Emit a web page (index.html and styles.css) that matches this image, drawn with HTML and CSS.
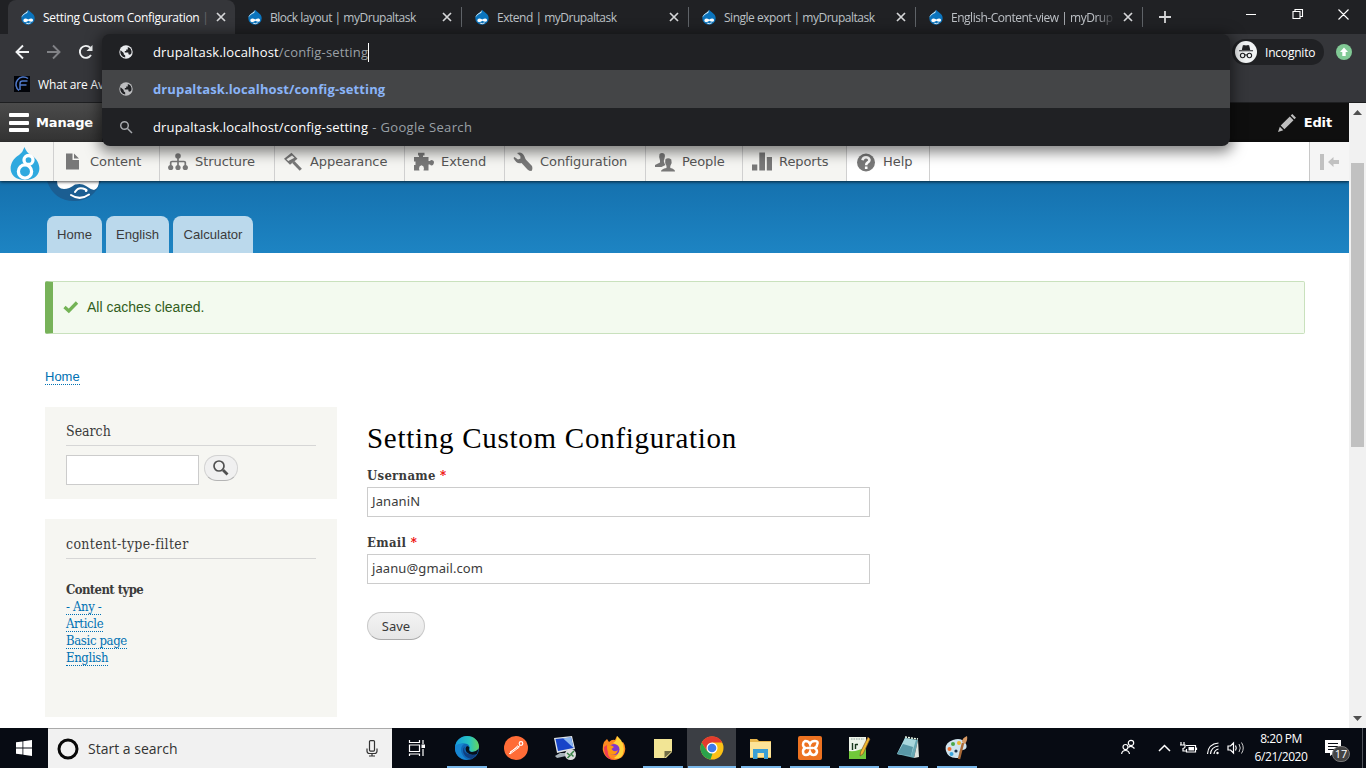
FILE: index.html
```html
<!DOCTYPE html>
<html lang="en">
<head>
<meta charset="utf-8">
<title>Setting Custom Configuration</title>
<link rel="stylesheet" href="styles.css">
</head>
<body>
<svg class="defs" width="0" height="0">
  <symbol id="drop" viewBox="0 0 16 16"><path d="M8.3.8C9 3 14.7 4.3 14.7 9.2A6.6 6.4 0 0 1 1.3 9.2C1.3 4.8 7 4 8.3.8Z" fill="#0b74bd"/><path d="M8 .9C6.500 4 2 4.500 1.500 8.600 3 6 5.500 4.600 7.200 4Z" fill="#d9f1fc"/><path d="M3.400 12C3 9.500 5.500 8.700 8.300 10.600 10.500 8.700 13.500 9 13 11.600 12.700 13.400 10.300 12.800 8.400 11.700 6.500 13.300 4 13.800 3.400 12Z" fill="#fff"/><path d="M6.200 14.200Q8.500 15.300 10.700 13.800" fill="none" stroke="#fff" stroke-width=".9"/></symbol>
  <symbol id="globe" viewBox="0 0 14 14"><circle cx="7" cy="7" r="6.700" fill="currentColor"/><path d="M1.600 5.300 4.700 8.100V9.300L6.200 10.400V12.500A5.500 5.500 0 0 1 1.600 5.300ZM8.800 1.900A5.500 5.500 0 0 1 12.300 8.400L11 9.700 9.500 9.300 9.300 7.500H5.800V6.100H7.200V4.400H8.800Z" fill="#202124"/></symbol>
  <symbol id="x" viewBox="0 0 10 10"><path d="M1 1 9 9M9 1 1 9" fill="none" stroke="currentColor" stroke-width="1.700"/></symbol>
</svg>
<div class="screen">
  <header class="chrome">
    <div class="tabstrip">
      <div class="tab active"><svg class="fav"><use href="#drop"/></svg><span>Setting Custom Configuration <i>|</i></span><svg class="close"><use href="#x"/></svg></div>
      <div class="tab"><svg class="fav"><use href="#drop"/></svg><span>Block layout | myDrupaltask</span><svg class="close"><use href="#x"/></svg></div>
      <div class="tab"><svg class="fav"><use href="#drop"/></svg><span>Extend | myDrupaltask</span><svg class="close"><use href="#x"/></svg></div>
      <div class="tab"><svg class="fav"><use href="#drop"/></svg><span>Single export | myDrupaltask</span><svg class="close"><use href="#x"/></svg></div>
      <div class="tab"><svg class="fav"><use href="#drop"/></svg><span class="long">English-Content-view | myDrup</span><svg class="close"><use href="#x"/></svg></div>
      <svg class="newtab" viewBox="0 0 12 12"><path d="M6 0V12M0 6H12" stroke="#d5d6d8" stroke-width="1.800"/></svg>
      <svg class="winbtns" width="104" height="12" viewBox="0 0 104 12" fill="none" stroke="#fff" stroke-width="1.100"><path d="M0 6.500H10M47 3.500h7v7h-7zM49 3.500V1.500h7.500v7h-2M92.500 1.500l10 10M102.500 1.500l-10 10"/></svg>
    </div>
    <div class="toolbar">
      <svg width="82" height="16" viewBox="0 0 82 16" fill="none" stroke="#f1f3f4" stroke-width="1.900"><path d="M14 8H1.500M8 1.500 1.500 8 8 14.500"/><path d="M32 8H44.500M38 1.500 44.500 8 38 14.500" stroke="#818286"/><path d="M76 11A6 6 0 1 1 75.200 3.700"/><path d="M77.500 1V7H71.500Z" fill="#f1f3f4" stroke="none"/></svg>
      <div class="incog"><svg width="22" height="22" viewBox="0 0 22 22"><circle cx="11" cy="11" r="11" fill="#f1f3f4"/><path d="M4 9.800H18M7.500 8.500 8.300 4.800H10L11 5.300 12 4.800H13.700L14.500 8.500Z" fill="#202124" stroke="#202124" stroke-width="1.100"/><g fill="none" stroke="#202124" stroke-width="1.100"><circle cx="7.600" cy="14.500" r="2.200"/><circle cx="14.400" cy="14.500" r="2.200"/><path d="M9.800 14.200Q11 13.400 12.200 14.200"/></g></svg><span>Incognito</span></div>
      <svg class="update" width="16" height="16" viewBox="0 0 16 16"><circle cx="8" cy="8" r="8" fill="#81c995"/><path d="M8 3.500 12 8H9.700V12H6.300V8H4Z" fill="#fff"/></svg>
    </div>
    <div class="bookmarks"><svg width="16" height="16" viewBox="0 0 16 16"><path d="M0 0H16V16H0Z" fill="#020409"/><path d="M14 2.500A7 7 0 1 0 5 14.500M13.500 5H8.500Q6 5 6 7.500V14M6 9H12.500" fill="none" stroke="#4f78c8" stroke-width="1.500"/></svg><span>What are Av</span></div>
  </header>

  <div class="viewport">
    <main class="page">
      <div class="adminbar"><div class="manage"><i></i><i></i><i></i></div><b>Manage</b><div class="edit"><svg width="18" height="18" viewBox="0 0 18 18" fill="#bebebe"><path d="M0 18 1.800 12.700 5.300 16.200ZM2.700 11.600 11.800 2.500 15.500 6.200 6.400 15.300ZM12.700 1.600 14.300 0 18 3.700 16.400 5.300Z"/></svg><b>Edit</b></div></div>
      <nav class="tray">
        <a class="d8"><svg width="32" height="34" viewBox="0 0 32 34"><path d="M15.500 0Q17 5 22 8C34 15 34 33 16 33S-2 15 10 8Q14 5 15.500 0Z" fill="#2fa9df"/><g fill="none" stroke="#fff" stroke-width="3.300"><ellipse cx="19.500" cy="13" rx="4.500" ry="4.500"/><circle cx="16" cy="24.500" r="6.600"/></g></svg></a>
        <a class="i1"><svg viewBox="0 0 20 20"><path d="M3 1.500H9.500V8H16V17.500H3ZM11 1.500 16 6.500H11Z"/></svg><span>Content</span></a>
        <a class="i2"><svg viewBox="0 0 20 20"><circle cx="10" cy="4" r="2.800"/><circle cx="2.700" cy="15.500" r="2.600"/><circle cx="10" cy="15.500" r="2.600"/><circle cx="17.300" cy="15.500" r="2.600"/><path d="M2.700 16V10.500Q2.700 9.500 4 9.500H16Q17.300 9.500 17.300 10.500V16M10 4V16" fill="none" stroke="#787878" stroke-width="1.700"/></svg><span>Structure</span></a>
        <a class="i3"><svg viewBox="0 0 20 20"><path d="M8.500.8 14.500 6.800 7 12.700 1 6.700ZM9 3.500 3.500 7.200 5.200 9 11.500 5.800Z" fill-rule="evenodd"/><path d="M10.300 10 17.800 17.800" stroke="#787878" stroke-width="3"/></svg><span>Appearance</span></a>
        <a class="i4"><svg viewBox="0 0 20 20"><path d="M0 5H5V3.500H4V.8H10.500V3.500H9V5H14.500V9H16Q17 7.500 19 8.500T19 13Q17 14 16 12.500H14.500V18.500H9.500Q11 14 7.500 13.300 4 14 5.500 18.500H0V13H1.500V9.500H0Z"/></svg><span>Extend</span></a>
        <a class="i5"><svg viewBox="0 0 20 20"><path d="M4 1Q9-1 11.500 4.500Q12 6.500 13 7.800L19 14Q20 17 18.500 19 16 19 14.500 17.500L8.500 11Q3.500 12.500.5 6L1.500 5 5 7.500 7.500 6.500 7.300 4Z"/></svg><span>Configuration</span></a>
        <a class="i6"><svg viewBox="0 0 20 20"><path d="M0 15V13L5 10.500V8.500Q3.500 5 4.500 2 7 0 9.500 2 10.500 4 9.500 6.500 8 9 9.500 11.500L10.500 13 6.500 15Z"/><path d="M6 19.500Q6 17 11.500 16V14Q9.500 11 10.300 7.500 13 5 16.300 7.500 17.500 11 15.300 14V16Q20 17 20 19.500Z"/></svg><span>People</span></a>
        <a class="i7"><svg viewBox="0 0 20 20"><path d="M0 12.500H5.300V18.500H0ZM7.300.5H13V18.500H7.300ZM14.800 5H20V18.500H14.800Z"/></svg><span>Reports</span></a>
        <a class="i8"><svg viewBox="0 0 20 20"><circle cx="10" cy="10.500" r="9"/><path d="M6.500 8.200Q7 5.200 10 5.200T13.500 8Q13.500 9.500 11.500 10.700 10.200 11.500 10.200 13.300M10.200 14.500V17" fill="none" stroke="#fff" stroke-width="2.600"/></svg><span>Help</span></a>
        <a class="orient"><svg width="20" height="16" viewBox="0 0 20 16"><path d="M0 0H4V16H0ZM8 8 13.500 3V6H19V10H13.500V13Z"/></svg></a>
      </nav>
      <header class="brand">
        <svg class="logo" width="54" height="20" viewBox="0 0 54 20"><path d="M0 0Q7 20 27 20T54 0Z" fill="#1b5e92"/><path d="M10 0Q10 8 17 8Q22 8 28 3.500 35 2 39 5T47 9Q52 7 52 0Z" fill="#fff"/><path d="M28 11Q31 6 36 7.500T39 10M24 14Q33 20 42 13.500" fill="none" stroke="#fff" stroke-width="2" stroke-linecap="round"/></svg>
        <nav class="menu"><a class="w1">Home</a><a class="w2">English</a><a class="w3">Calculator</a></nav>
      </header>
      <div class="status"><svg width="16" height="14" viewBox="0 0 16 14"><path d="M1.500 7 5.800 11 14 2.500" fill="none" stroke="#73b355" stroke-width="3.300"/></svg><span>All caches cleared.</span></div>
      <div class="crumb"><a>Home</a></div>
      <div class="columns">
        <aside>
          <section class="block search"><h2>Search</h2><div class="searchrow"><input type="text"><button><svg width="16" height="16" viewBox="0 0 16 16" fill="none" stroke="#505050"><circle cx="6" cy="6" r="5" stroke-width="1.700"/><path d="M10 10 14.500 14.500" stroke-width="2.800"/></svg></button></div></section>
          <section class="block filter"><h2>content-type-filter</h2><b>Content type</b><ul><li><a>- Any -</a></li><li><a>Article</a></li><li><a>Basic page</a></li><li><a>English</a></li></ul></section>
        </aside>
        <form class="config">
          <h1>Setting Custom Configuration</h1>
          <label>Username <em>*</em></label><div class="field">JananiN</div>
          <label>Email <em>*</em></label><div class="field">jaanu@gmail.com</div>
          <button type="button">Save</button>
        </form>
      </div>
    </main>
    <div class="scrollbar"><svg width="9" height="5" viewBox="0 0 9 5"><path d="M0 5 4.500 0 9 5Z" fill="#505050"/></svg><div class="thumb"></div><svg width="9" height="5" viewBox="0 0 9 5"><path d="M0 0H9L4.500 5Z" fill="#505050"/></svg></div>
  </div>

  <footer class="taskbar">
    <div class="start"><svg width="16" height="16" viewBox="0 0 16 16" fill="#fff"><path d="M0 2.300 6.500 1.400V7.500H0ZM7.300 1.300 16 0V7.500H7.300ZM0 8.400H6.500V14.600L0 13.700ZM7.300 8.400H16V16L7.300 14.700Z"/></svg></div>
    <div class="find"><svg width="22" height="22" viewBox="0 0 22 22"><circle cx="11" cy="11" r="9" fill="none" stroke="#080808" stroke-width="3"/></svg><span>Start a search</span><svg width="12" height="17" viewBox="0 0 12 17" fill="none" stroke="#333" stroke-width="1.200"><rect x="3.500" y=".6" width="5" height="10.500" rx="1"/><path d="M1 8.500V11Q1 13.500 3.500 13.500H8.500Q11 13.500 11 11V8.500M6 13.500V16M3 16H9"/></svg></div>
    <div class="task taskview"><svg width="18" height="16" viewBox="0 0 18 16" fill="none" stroke="#fff" stroke-width="1.200"><path d="M1.500 0V2.500H11.500V0M1.500 5H11.500V11.500H1.500ZM1.500 16V14H11.500V16M15 0V4M15 9V16"/><path d="M13.500 4.500H17V8H13.500Z" fill="#fff" stroke="none"/></svg></div>
    <div class="task on"><svg viewBox="0 0 24 24"><defs><linearGradient id="eg" x1="0" x2="1"><stop stop-color="#159cdd"/><stop offset=".6" stop-color="#28c5c0"/><stop offset="1" stop-color="#66d55d"/></linearGradient></defs><circle cx="12" cy="12" r="12" fill="#1068b7"/><path d="M0 11C1 4 6 0 12 0 19 0 24 5 24 10.500 24 16 16 17 14.300 14.500 15 12 15 7.500 9.500 7.500 4.500 7.500.5 10 0 11Z" fill="url(#eg)"/><path d="M9.500 8C4 10 5 20 13 23.800 4 24.500-1 17 0 10.500 2 7.500 7 6.800 9.500 8Z" fill="#1786d2"/><path d="M11 9.500Q8 12 10 16 13 20 22 17.500 20 21 16.500 23 8 21 8 14.500 8.500 11 11 9.500Z" fill="#103f80"/><path d="M14.300 11Q13.500 14 15 15.500 19 17.500 23.500 13L22 18Q15 20 11.500 16 9.500 12 12 10Z" fill="#08111c"/></svg></div>
    <div class="task"><svg viewBox="0 0 24 24"><circle cx="12" cy="12" r="12" fill="#ff6c37"/><path d="M5 18 14 9.500M6 16 16 9.500M6 18 15.500 11" stroke="#fff" stroke-width="1" fill="none"/><circle cx="17" cy="7.500" r="1.800" fill="none" stroke="#fff" stroke-width="1.200"/></svg></div>
    <div class="task"><svg viewBox="0 0 24 24"><path d="M1 2 19 0 22 13 4 17Z" fill="#dfe5e8"/><path d="M2.500 3 18 1.500 20.500 12 5 15Z" fill="#1744c8"/><path d="M10 2.200 18 1.500 20.500 12Z" fill="#8cb7f0"/><path d="M7 17H13V20L4 22 2 20Z" fill="#a7b2b9"/><circle cx="17.500" cy="18.500" r="5.500" fill="#ddd"/><path d="M14 17 17 19.500 14.500 22M21 15 18 18 20.500 20.500" fill="none" stroke="#378244" stroke-width="1.500"/></svg></div>
    <div class="task"><svg viewBox="0 0 24 24"><path d="M2 6 5 3 7 6Q10 3 13 4L15 0Q19 4 19 7L21 6Q24 10 23 15C21 27 3 27 .8 14Q.5 9 2 6Z" fill="#ff8a1f"/><path d="M15 0Q24 7 21 18 18 24 12 22 18 18 16 12 15 8 11 7Q15 5 15 0Z" fill="#ffd43b"/><path d="M2 11Q2 24 13 24 7 23 6 18L5 9Z" fill="#ef3d55"/><circle cx="12" cy="13.500" r="5.500" fill="#8038cf"/><path d="M5 10Q9 8 12 11L9.500 13Q12 17 16 14 14 20 9 18.500 5 16 5 10Z" fill="#ff980f"/></svg></div>
    <div class="task on"><svg viewBox="0 0 24 24"><path d="M3 3H21V16L15 22H3Z" fill="#f2e595"/><path d="M21 15 13.500 22V15Z" fill="#716d45"/></svg></div>
    <div class="task on current"><svg viewBox="0 0 24 24"><circle cx="12" cy="12" r="11.500" fill="#fbc116"/><path d="M12 12 7 15 1.700 6.800A11.500 11.500 0 0 1 22.300 6.500H12Z" fill="#e33b2e"/><path d="M1.700 6.800 7 15 12.500 17.500 10.500 23.400A11.500 11.500 0 0 1 1.700 6.800Z" fill="#2ba24c"/><circle cx="12" cy="12" r="5.500" fill="#fff"/><circle cx="12" cy="12" r="4.300" fill="#3f7bea"/></svg></div>
    <div class="task on"><svg viewBox="0 0 24 24"><path d="M1 3H8L10 5H22V22H1Z" fill="#e8b64b"/><path d="M1 6H22V21H1Z" fill="#fde498"/><path d="M4 13H19V23H15V17H8.500V23H4Z" fill="#3a9fd5"/></svg></div>
    <div class="task on"><svg viewBox="0 0 24 24"><rect width="24" height="24" rx="2" fill="#ed7221"/><path d="M7 5Q11 5 12 8 13 5 17 5T19 9Q19 11 16.500 12 19 13 19 16 18 19 15.500 19 13 19 12 16 11 19 8 19 5 19 5 15.500 5 13 7.500 12 5 11 5 8.500 5 6 7 5Z" fill="none" stroke="#fff" stroke-width="2.500"/><path d="M9 12H15" stroke="#fff" stroke-width="2.500"/></svg></div>
    <div class="task on"><svg viewBox="0 0 24 24"><path d="M2 1H19V23H2Z" fill="#edf3e9"/><path d="M2 15Q10 16 19 11V23H2Z" fill="#70c83a"/><path d="M4 3H17" stroke="#8ba39f" stroke-dasharray="1.500 1"/><path d="M5.500 7V14M8.500 8V13M8.500 8.500H11" stroke="#17361b" stroke-width="1.400"/><path d="M21 1 23 3 16 18 13 20 13.500 16Z" fill="#efb72f" stroke="#7b5531" stroke-width=".7"/></svg></div>
    <div class="task on"><svg viewBox="0 0 24 24"><path d="M9 2 22 4 18 22 1 18Z" fill="#67a8b4"/><path d="M9 2 20 4 15 20 1 18Z" fill="#a9d7dd"/><path d="M7 8 17 11 15 20 1 18Z" fill="#5998a7"/><path d="M22 4 23 21 18 22Z" fill="#dfe5df"/><path d="M9 1 22 3" stroke="#efe" stroke-width="1.500" stroke-dasharray="2 1"/></svg></div>
    <div class="task on"><svg viewBox="0 0 24 24"><path d="M1 15Q-1 7 8 4 17 1 21 8 23 13 18 14 14 14 15 17 17 22 11 22 3 22 1 15Z" fill="#cfe3ed"/><g><circle cx="4.500" cy="13" r="2" fill="#ef7130"/><circle cx="8" cy="8" r="2" fill="#4ca848"/><circle cx="14" cy="7" r="2" fill="#ecb62f"/><circle cx="6.500" cy="18" r="2" fill="#39a6df"/><circle cx="11" cy="15" r="1.600" fill="#18324b"/></g><path d="M18 7 14 23" stroke="#a86836" stroke-width="2.500"/><path d="M17 6Q17 2 22 0 23 4 20 8Z" fill="#d79a65"/></svg></div>
    <div class="systray">
      <svg width="118" height="18" viewBox="0 0 118 18" fill="none" stroke="#fff" stroke-width="1.200"><circle cx="11" cy="4" r="2.700"/><circle cx="5.500" cy="8" r="2.500"/><path d="M1.600 15Q2 11.500 5.500 11.500T9.500 15M8.500 8.500Q11 6 14.500 9.500"/><path d="M39 12 44.500 6.500 50 12" stroke-width="1.500"/><path d="M66 6.500H75.500V13H66.500V10M76.500 8.500V11M61 3V6M64 3V6M60 6H65V8Q65 9 63 9.500V12H66"/><path d="M68.500 8H74V11.500H68.500Z" fill="#fff" stroke="none"/><path d="M94 15Q94.500 11 98.500 10M90.500 15Q91 8 98.500 7M87.500 15Q88 5 98.500 4"/><circle cx="97.500" cy="14" r="1.200" fill="#fff" stroke="none"/><path d="M108 7H110.500L113.500 4V14L110.500 11H108ZM115.500 6.500Q117 9 115.500 11.500"/></svg>
      <svg width="8" height="18" viewBox="0 0 8 18" fill="none" stroke="#ccc"><path d="M1 5Q3.500 9 1 13M3.500 3.500Q7 9 3.500 14.500"/></svg>
      <div class="clock"><span>8:20 PM</span><span>6/21/2020</span></div>
      <div class="notif"><svg width="16" height="16" viewBox="0 0 16 16"><path d="M0 0H16V13H9L5 16V13H0Z" fill="#fff"/><path d="M3 3.500H13M3 6.500H13M3 9.500H10" stroke="#080c14" stroke-width="1.200"/></svg><b>17</b></div>
    </div>
    <div class="peek"></div>
  </footer>

  <div class="omnibox">
    <div class="row typed"><svg><use href="#globe"/></svg><span>drupaltask.localhost</span><s>/config-setting</s><i class="caret"></i></div>
    <div class="row hit"><svg><use href="#globe"/></svg><b>drupaltask.localhost/config-setting</b></div>
    <div class="row"><svg viewBox="0 0 14 14" fill="none" stroke="#a5a8ac" stroke-width="1.500"><circle cx="5.500" cy="5.500" r="3.800"/><path d="M8.500 8.500 13 13"/></svg><span>drupaltask.localhost/config-setting</span><s class="via">- Google Search</s></div>
  </div>
</div>
</body>
</html>
```
FILE: styles.css
```css
* { box-sizing: border-box; }
body { margin: 0; overflow: hidden; }
svg { display: block; flex: none; }
.defs { position: absolute; }
.screen { position: relative; width: 1366px; height: 768px; display: flex; flex-direction: column; font-family: "Open Sans", sans-serif; }

/* browser frame */
.chrome { height: 103px; background: #35363a; border-bottom: 1px solid #1e1f21; font-size: 12px; color: #fff; flex: none; }
.tabstrip { height: 34px; display: flex; align-items: center; background: #202124; padding-left: 8px; }
.tab { width: 227px; height: 34px; display: flex; align-items: center; padding: 0 10px 0 12px; gap: 7px; color: #bdc1c6; background: linear-gradient(#5f6368, #5f6368) right center / 1px 20px no-repeat; letter-spacing: -0.48px; }
.tab.active { background: #35363a; border-radius: 8px 8px 0 0; color: #fff; letter-spacing: -0.3px; }
.fav { width: 16px; height: 16px; }
.tab span { flex: 1; white-space: nowrap; }
.tab span i { font-style: normal; color: #66676b; }
.tab .long { -webkit-mask: linear-gradient(90deg, #000 145px, transparent 164px); mask: linear-gradient(90deg, #000 145px, transparent 164px); }
.close { width: 10px; height: 10px; color: #d5d6d8; }
.newtab { width: 12px; height: 12px; margin-left: 16px; }
.winbtns { margin: -6px 16px 0 auto; }
.toolbar { height: 36px; display: flex; align-items: center; padding: 0 14px 0 15px; }
.incog { margin-left: auto; width: 92px; height: 26px; background: #202124; border-radius: 13px; display: flex; align-items: center; gap: 8px; padding-left: 3px; letter-spacing: -0.2px; }
.update { margin-left: 12px; }
.bookmarks { height: 28px; display: flex; align-items: center; gap: 8px; padding-left: 14px; letter-spacing: -0.15px; }
.omnibox { position: absolute; z-index: 5; left: 102px; top: 34px; width: 1128px; height: 112px; border-radius: 8px; overflow: hidden; background: #202124; color: #fff; font-size: 13px; letter-spacing: 0.17px; box-shadow: 0 3px 14px 3px rgba(0,0,0,.5); }
.row { height: 38px; display: flex; align-items: center; padding-left: 17px; white-space: pre; }
.row.typed { height: 36px; }
.row svg { width: 14px; height: 14px; margin-right: 20px; color: #e8eaed; }
.row s { text-decoration: none; color: #9aa0a6; }
.row .via { margin-left: 4px; letter-spacing: 0.35px; }
.row.hit { background: #444547; color: #8ab4f8; letter-spacing: 0.12px; }
.row.hit svg { color: #bcbdbf; }
.caret { width: 1px; height: 19px; background: #fff; }

/* document area */
.viewport { height: 625px; display: flex; flex: none; }
.page { width: 1349px; background: #fff; overflow: hidden; color: #3b3b3b; }
.scrollbar { width: 17px; background: #f1f1f1; display: flex; flex-direction: column; align-items: center; padding: 7px 0; }
.thumb { width: 13px; height: 284px; margin-top: 48px; margin-bottom: auto; background: #c1c1c1; }
.adminbar { height: 39px; display: flex; align-items: center; padding: 0 17px 0 9px; gap: 7px; color: #fff; font: 13px "DejaVu Sans", sans-serif; letter-spacing: -0.15px; background: linear-gradient(90deg, transparent 102px, #0f0f0f 102px), linear-gradient(#4b4b4b, #323232); }
.manage { width: 20px; height: 19px; display: flex; flex-direction: column; justify-content: space-between; }
.manage i { height: 4px; border-radius: 1px; background: #fff; }
.edit { margin-left: auto; display: flex; align-items: center; gap: 8px; }
.tray { position: relative; z-index: 1; height: 39px; display: flex; background: #fff; font: 13px "DejaVu Sans", sans-serif; color: #565656; box-shadow: 0 1px 3px rgba(0,0,0,.7); letter-spacing: -0.07px; }
.tray a { display: flex; align-items: center; padding-left: 9px; gap: 7px; background: #f5f5f2; border-right: 1px solid #d0d0d0; }
.tray a svg { width: 20px; height: 20px; fill: #787878; }
.tray .d8 { width: 54px; }
.tray .d8 svg { width: 32px; height: 34px; margin-top: 4px; }
.tray .i1 { width: 106px; } .tray .i2 { width: 115px; padding-left: 8px; } .tray .i3 { width: 130px; padding-left: 8px; } .tray .i4 { width: 100px; }
.tray .i5 { width: 141px; padding-left: 8px; } .tray .i6 { width: 97px; } .tray .i7 { width: 104px; }
.tray .i8 { width: 83px; background: #fff; }
.tray .orient { margin-left: auto; width: 40px; border: 0; border-left: 1px solid #c8c8c8; background: #f5f5f5; padding-left: 10px; }
.tray .orient svg { fill: #c1c1c1; height: 16px; }
.brand { height: 72px; padding-left: 47px; background: linear-gradient(#1571ae, #1d84c3); }
.menu { display: flex; gap: 4px; margin-top: 15px; font: 13.1px "Liberation Sans", sans-serif; }
.menu a { height: 37px; border-radius: 8px 8px 0 0; background: #bbd9ec; display: flex; justify-content: center; align-items: center; }
.w1 { width: 55px; } .w2 { width: 63px; } .w3 { width: 80px; }
.status { margin: 28px 44px 0 45px; height: 53px; border: 1px solid #c9e1bd; border-left: 8px solid #77b259; border-radius: 2px; background: #f3faef; color: #325e1c; display: flex; align-items: center; gap: 8px; padding: 0 0 2px 10px; font: 14px "Liberation Sans", sans-serif; }
.crumb { margin: 34px 0 0 45px; height: 39px; font: 13px/17px "Liberation Sans", sans-serif; }
.crumb a, li a { color: #0071b3; border-bottom: 1px dotted #0071b3; }
.columns { display: flex; gap: 30px; padding-left: 45px; font-family: "DejaVu Serif Condensed", "DejaVu Serif", serif; font-stretch: condensed; font-size: 13px; }
aside { width: 292px; }
.block { background: #f6f6f2; padding: 14px 21px 0; }
.search { height: 92px; margin-bottom: 20px; }
.filter { height: 198px; padding-top: 15px; line-height: 17px; }
.filter b { letter-spacing: -0.6px; }
.filter li { letter-spacing: -0.35px; }
h2 { margin: 0 0 9px; height: 25px; line-height: 21px; border-bottom: 1px solid #d6d6d6; font-weight: normal; font-size: 14px; }
.filter h2 { margin-bottom: 22px; letter-spacing: 0.35px; }
.searchrow { display: flex; gap: 5px; }
.searchrow input { width: 133px; height: 30px; padding: 0; border: 1px solid #ccc; background: #fff; }
.searchrow button { width: 34px; height: 26px; padding: 0; border: 1px solid #d2d2d2; border-bottom-color: #b4b4b4; border-radius: 13px; background: #f0f0f0; display: flex; justify-content: center; align-items: center; }
ul { list-style: none; margin: 0; padding: 0; }
li { height: 17px; }
li a { line-height: 14px; }
.config { width: 503px; padding-top: 12px; }
h1 { margin: 0 0 9px; height: 39px; font: 29px/38px "Liberation Serif", serif; letter-spacing: 0.73px; white-space: nowrap; color: #000; }
label { display: block; height: 20px; line-height: 17px; font-weight: bold; letter-spacing: 0.3px; }
label em { color: #e00; font-style: normal; }
.field { height: 30px; border: 1px solid #ccc; margin-bottom: 17px; padding-left: 4px; line-height: 27px; font-family: "Noto Sans", sans-serif; font-size: 13px; letter-spacing: 0.1px; }
.config button { width: 58px; height: 28px; margin-top: 11px; padding: 0 0 1px; border: 1px solid #c9c9c9; border-bottom-color: #aaa; border-radius: 14px; background: linear-gradient(#f3f3f3, #e6e6e6); font: 13px "Noto Sans", sans-serif; color: #3a3a3a; }

/* desktop taskbar */
.taskbar { height: 40px; display: flex; background: #070b13; color: #fff; }
.start { width: 48px; display: flex; align-items: center; justify-content: center; }
.find { width: 344px; background: #f1f1f1; border-top: 1px solid #aaa; display: flex; align-items: center; padding: 0 14px 0 9px; gap: 9px; font-size: 14px; color: #333; }
.find span { flex: 1; }
.task { width: 49px; display: flex; align-items: center; justify-content: center; background: linear-gradient(#79b7ea, #79b7ea) center bottom / 40px 0 no-repeat; }
.task svg { width: 24px; height: 24px; }
.task.taskview svg { width: 18px; height: 16px; }
.taskview + .task { margin-left: 1px; }
.task.on { background-size: 40px 2px; }
.task.current { background: linear-gradient(#79b7ea, #79b7ea) center bottom / 48px 2px no-repeat, #3b3e44; }
.systray { margin-left: auto; display: flex; align-items: center; padding-right: 11px; font-size: 12px; }
.clock { width: 70px; text-align: center; line-height: 18px; display: flex; flex-direction: column; align-items: center; letter-spacing: -0.45px; }
.notif { position: relative; margin-left: 9px; width: 26px; }
.notif b { position: absolute; left: 7px; top: 6px; width: 18px; height: 16px; border-radius: 9px; background: #444; border: 1px solid #777; font: 11px/14px "Open Sans", sans-serif; text-align: center; }
.peek { width: 4px; border-left: 1px solid #50545b; }
```
